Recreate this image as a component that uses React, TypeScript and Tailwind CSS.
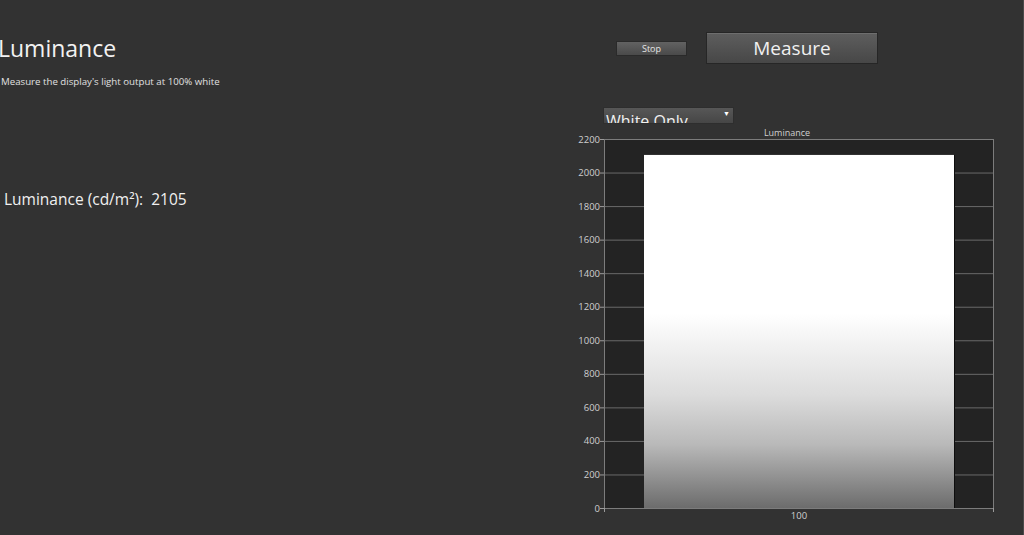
import React from "react";

const TICKS = [0, 200, 400, 600, 800, 1000, 1200, 1400, 1600, 1800, 2000, 2200];
const MAX = 2200;
const VALUE = 2105;

// plot geometry (relative to the svg)
const PL = 44;
const PR = 433;
const PT = 14;
const PB = 383;
const yOf = (v: number) => PB - (v / MAX) * (PB - PT);

function LuminanceChart() {
  const barTop = yOf(VALUE);
  return (
    <svg width={450} height={410} className="block" style={{ fontFamily: '"Open Sans", "Noto Sans", sans-serif' }}>
      <defs>
        <linearGradient id="barFill" x1="0" y1="0" x2="0" y2="1">
          <stop offset="0" stopColor="#ffffff" />
          <stop offset="0.45" stopColor="#ffffff" />
          <stop offset="0.68" stopColor="#dcdcdc" />
          <stop offset="0.82" stopColor="#b9b9b9" />
          <stop offset="1" stopColor="#6c6c6c" />
        </linearGradient>
      </defs>
      <text x={227} y={11} textAnchor="middle" fontSize={9} fill="#d0d0d0">
        Luminance
      </text>
      <rect x={PL} y={PT} width={PR - PL} height={PB - PT} fill="#232323" />
      {TICKS.map((t) => (
        <g key={t}>
          <line x1={PL} x2={PR} y1={yOf(t) + 0.5} y2={yOf(t) + 0.5} stroke="#6a6a6a" strokeWidth={1} />
          <line x1={PL - 4} x2={PL} y1={yOf(t) + 0.5} y2={yOf(t) + 0.5} stroke="#9a9a9a" strokeWidth={1} />
          <text x={PL - 4} y={yOf(t) + 3.5} textAnchor="end" fontSize={9.5} fill="#cfcfcf">
            {t}
          </text>
        </g>
      ))}
      <rect x={84} y={barTop} width={310} height={PB - barTop} fill="url(#barFill)" />
      <line x1={394.5} x2={394.5} y1={barTop} y2={PB} stroke="#0e0e0e" strokeWidth={1} />
      <rect x={PL + 0.5} y={PT + 0.5} width={PR - PL} height={PB - PT} fill="none" stroke="#7c7c7c" strokeWidth={1} />
      <line x1={PL + 0.5} x2={PL + 0.5} y1={PB} y2={PB + 4} stroke="#9a9a9a" />
      <line x1={PR + 0.5} x2={PR + 0.5} y1={PB} y2={PB + 4} stroke="#9a9a9a" />
      <text x={239} y={394} textAnchor="middle" fontSize={9.5} fill="#cfcfcf">
        100
      </text>
    </svg>
  );
}

export default function App() {
  return (
    <div
      className="w-[1024px] h-[535px] overflow-hidden bg-[#323232] flex text-[#e8e8e8] border-r border-[#4a4a4a]"
      style={{ fontFamily: '"Open Sans", "Noto Sans", sans-serif' }}
    >
      {/* left: title + reading */}
      <div className="flex-1 flex flex-col">
        <h1 className="mt-[33px] -ml-[2px] text-[23px] leading-[30px] font-normal text-[#f2f2f2]">Luminance</h1>
        <p className="mt-[12px] ml-[1px] text-[9.7px] leading-[14px] text-[#e0e0e0]">
          Measure the display's light output at 100% white
        </p>
        <div className="mt-[100px] ml-[4px] text-[15.5px] leading-[21px] text-[#f0f0f0]">
          Luminance (cd/m²):&nbsp;&nbsp;2105
        </div>
      </div>

      {/* right: controls + chart */}
      <div className="w-[463px] flex flex-col">
        <div className="mt-[32px] flex items-center">
          <button className="ml-[56px] w-[71px] h-[15px] bg-gradient-to-b from-[#626262] to-[#4a4a4a] border border-[#2a2a2a] text-[9px] leading-none text-[#e6e6e6]">
            Stop
          </button>
          <button className="ml-[19px] w-[172px] h-[32px] bg-gradient-to-b from-[#5e5e5e] to-[#474747] border border-[#262626] shadow-[inset_0_1px_0_#6e6e6e] text-[19px] leading-none text-[#f0f0f0]">
            Measure
          </button>
        </div>
        <div className="mt-[43px] ml-[43px] w-[131px] h-[17px] overflow-hidden relative bg-gradient-to-b from-[#575757] to-[#464646] border border-[#2e2e2e]">
          <span className="absolute left-[2px] top-[5px] text-[16px] leading-none text-[#f0f0f0]">White Only</span>
          <span className="absolute right-[3px] top-[2px] text-[7px] leading-none text-white">▼</span>
        </div>
        <div className="mt-[1px]">
          <LuminanceChart />
        </div>
      </div>
    </div>
  );
}
